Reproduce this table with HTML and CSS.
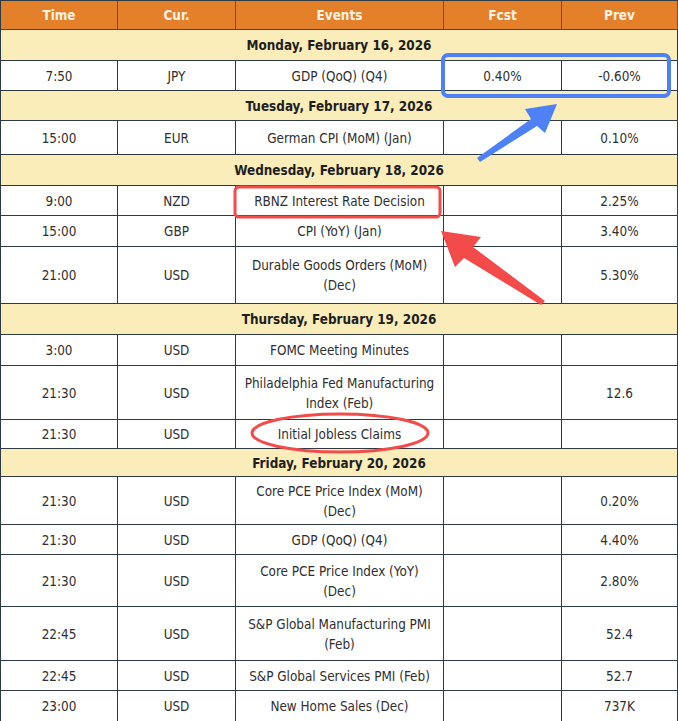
FILE: index.html
```
<!DOCTYPE html>
<html>
<head>
<meta charset="utf-8">
<link rel="stylesheet" href="styles.css">
</head>
<body>
<div class="wrap">
<table class="cal">
<colgroup><col class="c1"><col class="c2"><col class="c3"><col class="c4"><col class="c5"></colgroup>
<thead>
<tr class="hd h29"><th>Time</th><th>Cur.</th><th>Events</th><th>Fcst</th><th>Prev</th></tr>
</thead>
<tbody>
<tr class="day h31"><td colspan="5">Monday, February 16, 2026</td></tr>
<tr class="h30"><td>7:50</td><td>JPY</td><td>GDP (QoQ) (Q4)</td><td>0.40%</td><td>-0.60%</td></tr>
<tr class="day h30"><td colspan="5">Tuesday, February 17, 2026</td></tr>
<tr class="h34"><td>15:00</td><td>EUR</td><td>German CPI (MoM) (Jan)</td><td></td><td>0.10%</td></tr>
<tr class="day h31"><td colspan="5">Wednesday, February 18, 2026</td></tr>
<tr class="h30"><td>9:00</td><td>NZD</td><td>RBNZ Interest Rate Decision</td><td></td><td>2.25%</td></tr>
<tr class="h31"><td>15:00</td><td>GBP</td><td>CPI (YoY) (Jan)</td><td></td><td>3.40%</td></tr>
<tr class="h57"><td>21:00</td><td>USD</td><td>Durable Goods Orders (MoM)<br>(Dec)</td><td></td><td>5.30%</td></tr>
<tr class="day h31"><td colspan="5">Thursday, February 19, 2026</td></tr>
<tr class="h31"><td>3:00</td><td>USD</td><td>FOMC Meeting Minutes</td><td></td><td></td></tr>
<tr class="h54"><td>21:30</td><td>USD</td><td>Philadelphia Fed Manufacturing<br>Index (Feb)</td><td></td><td>12.6</td></tr>
<tr class="h29"><td>21:30</td><td>USD</td><td>Initial Jobless Claims</td><td></td><td></td></tr>
<tr class="day h28"><td colspan="5">Friday, February 20, 2026</td></tr>
<tr class="h48"><td>21:30</td><td>USD</td><td>Core PCE Price Index (MoM)<br>(Dec)</td><td></td><td>0.20%</td></tr>
<tr class="h30"><td>21:30</td><td>USD</td><td>GDP (QoQ) (Q4)</td><td></td><td>4.40%</td></tr>
<tr class="h52"><td>21:30</td><td>USD</td><td>Core PCE Price Index (YoY)<br>(Dec)</td><td></td><td>2.80%</td></tr>
<tr class="h54"><td>22:45</td><td>USD</td><td>S&amp;P Global Manufacturing PMI<br>(Feb)</td><td></td><td>52.4</td></tr>
<tr class="h30"><td>22:45</td><td>USD</td><td>S&amp;P Global Services PMI (Feb)</td><td></td><td>52.7</td></tr>
<tr class="h31"><td>23:00</td><td>USD</td><td>New Home Sales (Dec)</td><td></td><td>737K</td></tr>
</tbody>
</table>
<svg class="marks" width="678" height="721" viewBox="0 0 678 721">
  <rect x="443" y="55" width="226" height="41" rx="5" ry="5" fill="none" stroke="#4e80f6" stroke-width="4"/>
  <polygon points="557,104 545,133 537,126 480,162 477,158 531,119 525,109" fill="#4e80f6"/>
  <rect x="235" y="187" width="205" height="30" rx="4" ry="4" fill="none" stroke="#f34a4a" stroke-width="3"/>
  <polygon points="441,231 481,237 473,247 545,301 541,305 464,258 455,267" fill="#f34a4a"/>
  <ellipse cx="340" cy="433" rx="88" ry="19" fill="none" stroke="#f34a4a" stroke-width="3"/>
</svg>
</div>
</body>
</html>
```
FILE: styles.css
```
html, body {
  margin: 0;
  padding: 0;
  background: #ffffff;
}
.wrap {
  position: relative;
  width: 678px;
  height: 721px;
  overflow: hidden;
}
.cal {
  border-collapse: separate;
  border-spacing: 0;
  table-layout: fixed;
  width: 678px;
  border-top: 1px solid #2e3a42;
  border-left: 1px solid #2e3a42;
  font-family: "DejaVu Sans Condensed", "Liberation Sans", sans-serif;
  font-size: 13.4px;
  color: #2f2f2f;
}
.c1 { width: 117px; }
.c2 { width: 118px; }
.c3 { width: 208px; }
.c4 { width: 118px; }
.c5 { width: 116px; }
.cal th, .cal td {
  box-sizing: border-box;
  padding: 2px 4px 0;
  text-align: center;
  vertical-align: middle;
  border-right: 1px solid #2e3a42;
  border-bottom: 1px solid #2e3a42;
  line-height: 20px;
  font-weight: normal;
}
.hd th {
  background: #e5802a;
  color: #fdf3e6;
  font-weight: bold;
  border-right-color: #7a4a22;
  border-bottom-color: #5a4030;
}
.day td {
  background: #faedba;
  color: #1e1e1e;
  font-weight: bold;
}
.h28 td, .h28 th { height: 28px; }
.h29 td, .h29 th { height: 29px; }
.h30 td { height: 30px; }
.h31 td { height: 31px; }
.h34 td { height: 34px; }
.h48 td { height: 48px; }
.h52 td { height: 52px; }
.h54 td { height: 54px; }
.h57 td { height: 57px; }
.marks {
  position: absolute;
  left: 0;
  top: 0;
  pointer-events: none;
}
```
